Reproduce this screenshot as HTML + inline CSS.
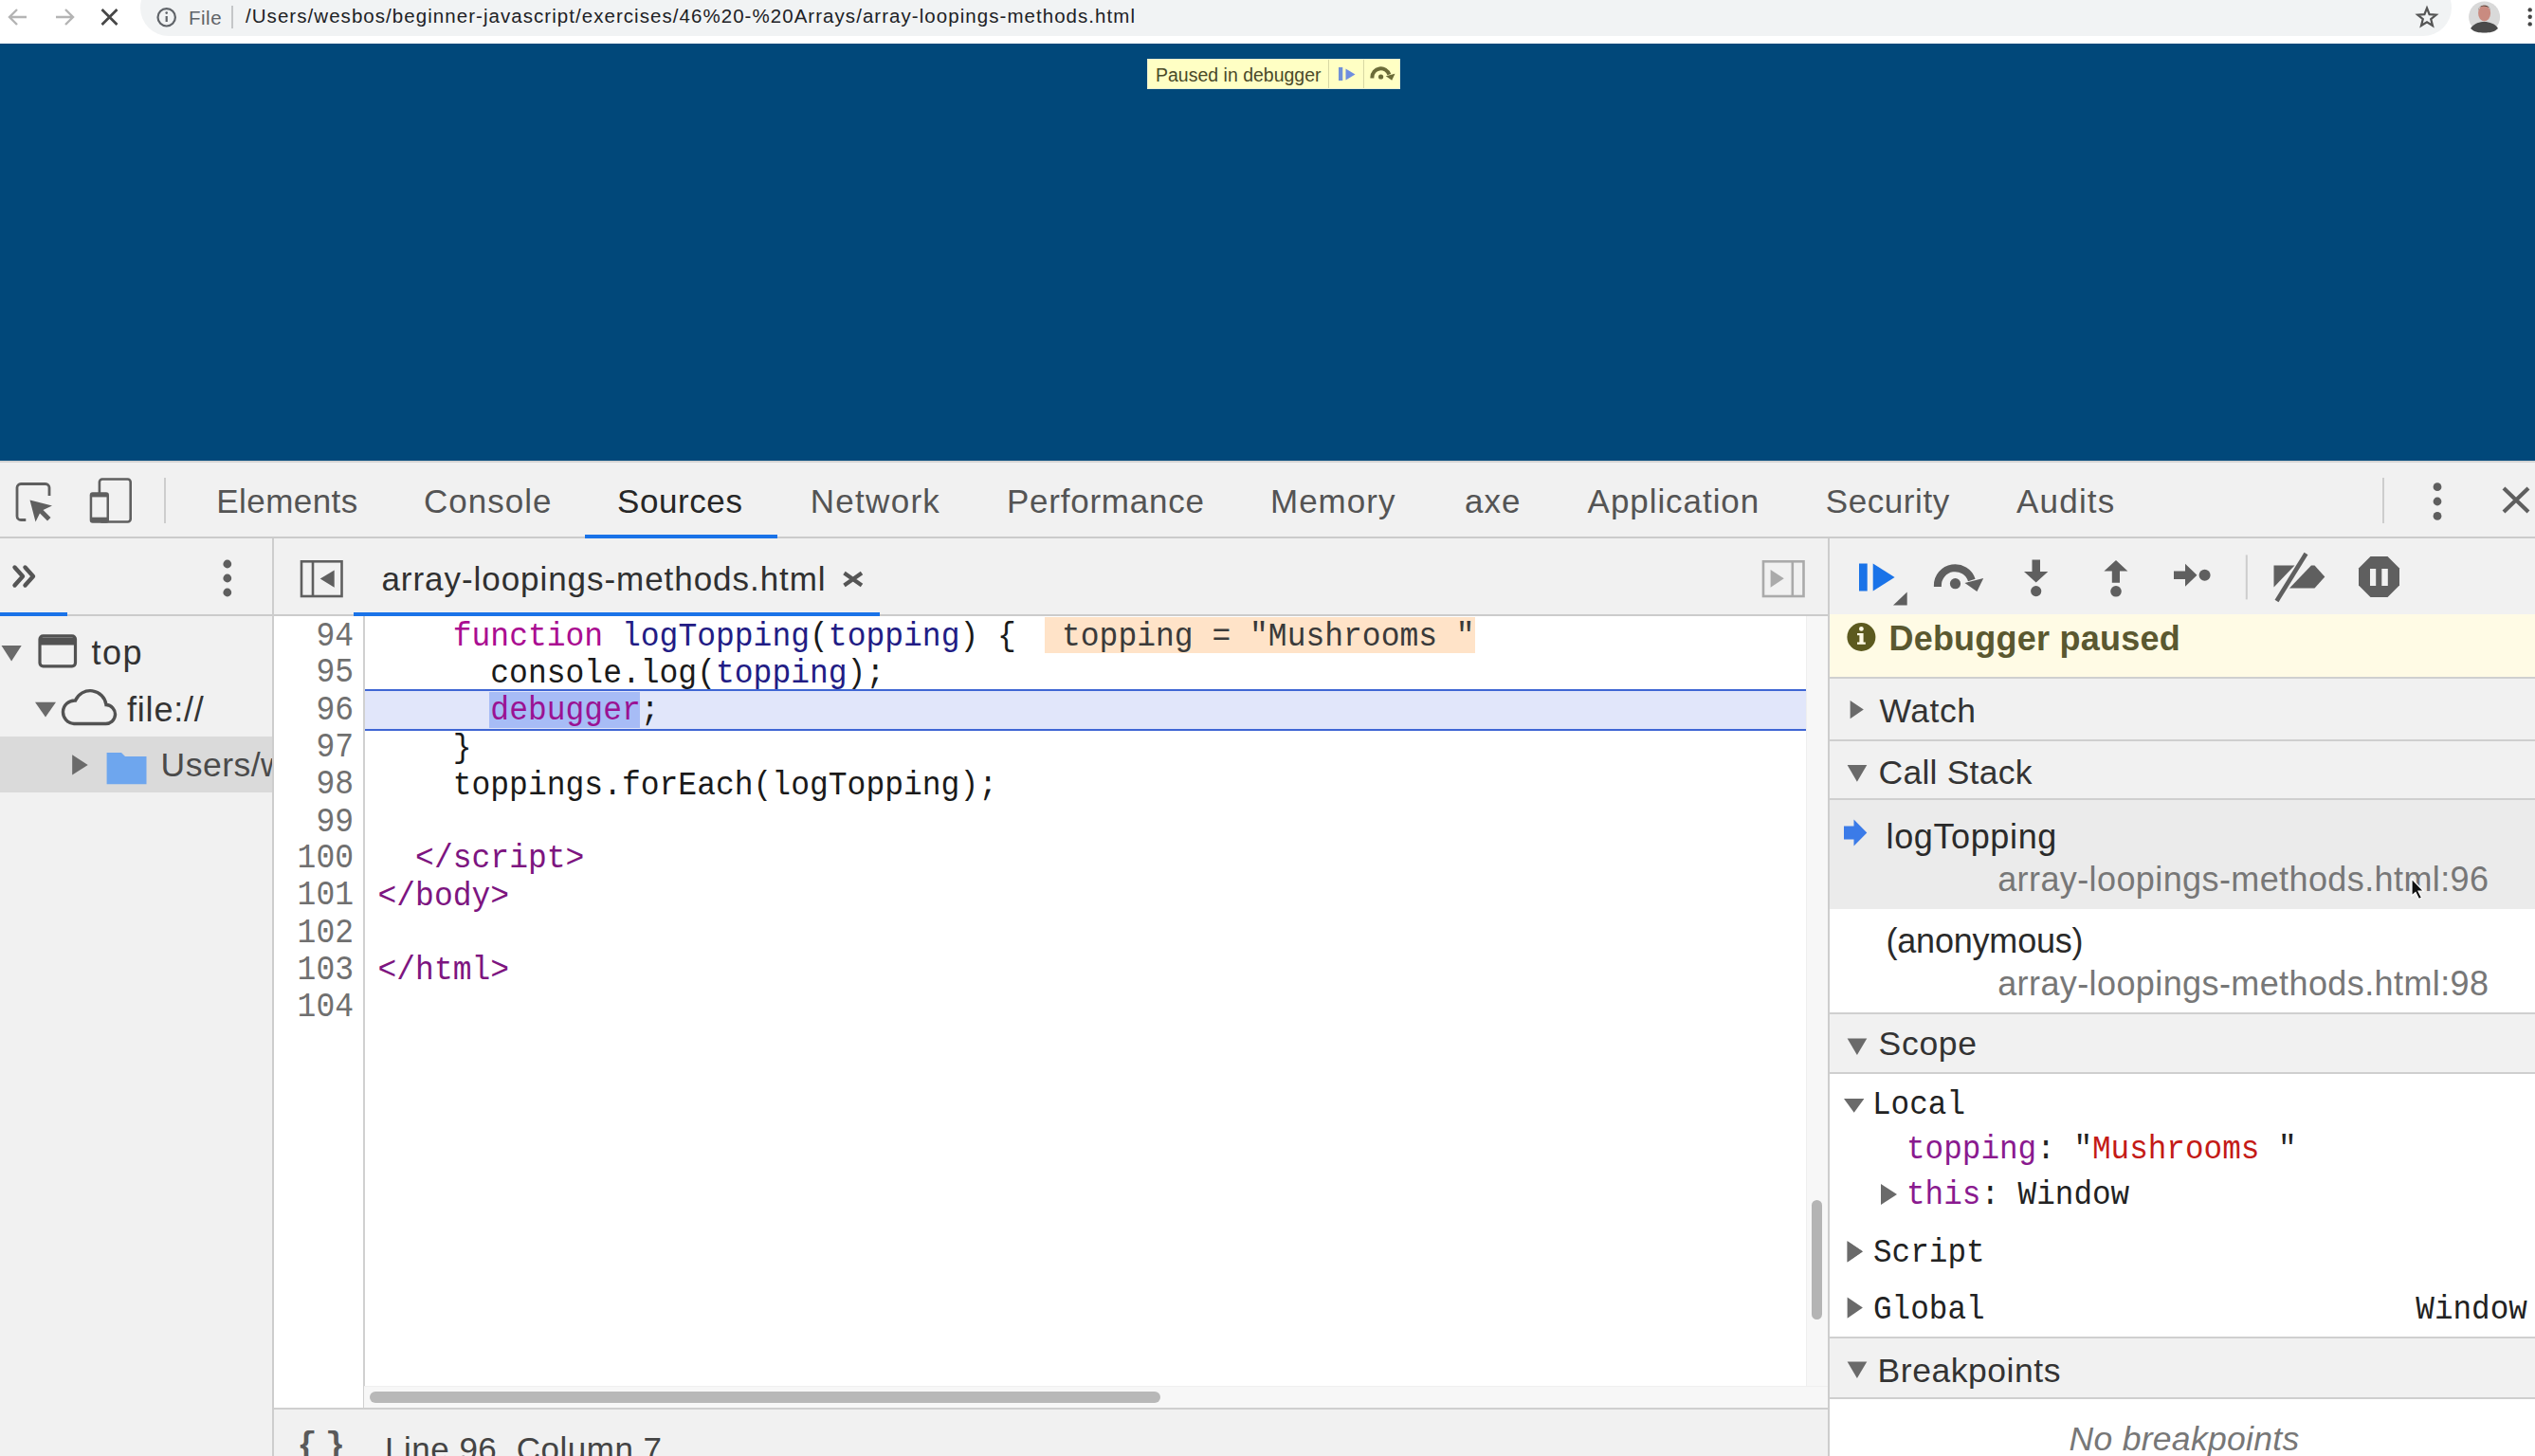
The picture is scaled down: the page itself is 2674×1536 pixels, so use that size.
<!DOCTYPE html>
<html><head><meta charset="utf-8">
<style>
*{box-sizing:border-box;margin:0;padding:0}
html,body{width:2674px;height:1536px;overflow:hidden;background:#fff}
body{position:relative;font-family:"Liberation Sans",sans-serif;color:#333}
.a{position:absolute}
.t{position:absolute;white-space:pre;line-height:1}
.mono{font-family:"Liberation Mono",monospace}
svg{position:absolute;overflow:visible}
</style></head><body>

<!-- Chrome toolbar -->
<div class="a" style="left:0;top:0;width:2674px;height:46px;background:#fff"></div>
<div class="a" style="left:148px;top:-22px;width:2438px;height:60px;border-radius:30px;background:#f1f3f4"></div>
<svg style="left:0;top:0" width="200" height="46">
  <path d="M28 18H11M18 10L10 18L18 26" stroke="#b4b4b4" stroke-width="2.4" fill="none"/>
  <path d="M59 18H76M69 10L77 18L69 26" stroke="#b4b4b4" stroke-width="2.4" fill="none"/>
  <path d="M107.5 10L123.5 26M123.5 10L107.5 26" stroke="#474747" stroke-width="2.8" fill="none"/>
  <circle cx="175.7" cy="18.3" r="9.2" stroke="#5f6368" stroke-width="2.2" fill="none"/>
  <path d="M175.7 17v6" stroke="#5f6368" stroke-width="2.2"/>
  <circle cx="175.7" cy="13.6" r="1.3" fill="#5f6368"/>
</svg>
<div class="t" style="left:199px;top:8.8px;font-size:20.5px;color:#5f6368;letter-spacing:0.5px">File</div>
<div class="a" style="left:244px;top:6px;width:2px;height:24px;background:#c4c6c8"></div>
<div class="t" id="url" style="left:259px;top:7px;font-size:20.5px;color:#202124;letter-spacing:1.05px">/Users/wesbos/beginner-javascript/exercises/46%20-%20Arrays/array-loopings-methods.html</div>
<svg style="left:2540px;top:0" width="134" height="46">
  <path d="M20 8.5L22.6 15.2L29.7 15.6L24.2 20.1L26 27L20 23.2L14 27L15.8 20.1L10.3 15.6L17.4 15.2Z" stroke="#555" stroke-width="2.2" fill="none" stroke-linejoin="miter"/>
  <circle cx="80.6" cy="18" r="16.5" fill="#d9d9d9"/>
  <path d="M66 30C70 24 76 23 80.6 23C86 23 92 25 95 30C91 34 86 34.5 80.6 34.5C75 34.5 70 34 66 30Z" fill="#4a4a4a"/>
  <ellipse cx="80.6" cy="14" rx="6.5" ry="8.5" fill="#c98b80"/>
  <path d="M74 11C74 4 87 4 87 11L86 8C82 6 78 6 75 8Z" fill="#4b3f35"/>
  <circle cx="128.7" cy="10.4" r="2.2" fill="#444"/>
  <circle cx="128.7" cy="17.8" r="2.2" fill="#444"/>
  <circle cx="128.7" cy="25.4" r="2.2" fill="#444"/>
</svg>

<!-- Page -->
<div class="a" style="left:0;top:46px;width:2674px;height:440px;background:#01487a"></div>
<div class="a" style="left:1210px;top:62px;width:267px;height:32px;background:#ffffc4;border:1px solid #e9eecf"></div>
<div class="a" style="left:1401px;top:63px;width:1px;height:30px;background:#d8d8a4"></div>
<div class="a" style="left:1438px;top:63px;width:1px;height:30px;background:#d8d8a4"></div>
<div class="t" style="left:1219px;top:70px;font-size:19.5px;color:#4a4a28">Paused in debugger</div>
<svg style="left:1400px;top:60px" width="80" height="36">
  <rect x="12" y="11" width="4.3" height="14" fill="#7090d8"/>
  <path d="M19.5 12.4L29.5 18.5L19.5 24.5Z" fill="#6f8ee0"/>
  <path d="M47.4 22.5V21.5A9.2 9.2 0 0 1 65.35 18.65" stroke="#6b6b38" stroke-width="4" fill="none"/>
  <path d="M61.8 20.2L71.5 17.8L68.2 24.8Z" fill="#6b6b38"/>
  <circle cx="56.6" cy="21" r="2.6" fill="#6b6b38"/>
</svg>

<!-- DevTools main toolbar -->
<div class="a" style="left:0;top:486px;width:2674px;height:82px;background:#f1f1f1;border-top:2px solid #d3d3d3;border-bottom:2px solid #cbcbcb"></div>
<svg style="left:0;top:486px" width="200" height="82">
  <path d="M27.3 62.5H22A4 4 0 0 1 18 58.5V28.5A4 4 0 0 1 22 24.5H48A4 4 0 0 1 52 28.5V37" stroke="#5f5f5f" stroke-width="2.8" fill="none"/>
  <path d="M31.5 41.5L55 47.5L45.5 52L53.5 60L50 63.5L42 55.5L37.5 64.5Z" fill="#5f5f5f"/>
  <rect x="104.9" y="19.5" width="32.8" height="45" rx="3" stroke="#5f5f5f" stroke-width="2.6" fill="#f1f1f1"/>
  <rect x="94.7" y="33.3" width="20.3" height="32.4" rx="3" fill="#5f5f5f"/>
  <rect x="97.2" y="38.4" width="15.3" height="21.3" fill="#f1f1f1"/>
</svg>
<div class="a" style="left:173px;top:504px;width:2px;height:48px;background:#cdcdcd"></div>
<div class="t" style="left:228.3px;top:511px;font-size:35px;color:#545454;letter-spacing:0.43px">Elements</div>
<div class="t" style="left:447.0px;top:511px;font-size:35px;color:#545454;letter-spacing:1.0px">Console</div>
<div class="t" style="left:651.0px;top:511px;font-size:35px;color:#262626;letter-spacing:0.58px">Sources</div>
<div class="a" style="left:617px;top:564px;width:203px;height:4px;background:#1a73e8"></div>
<div class="t" style="left:854.8px;top:511px;font-size:35px;color:#545454;letter-spacing:1.28px">Network</div>
<div class="t" style="left:1061.9px;top:511px;font-size:35px;color:#545454;letter-spacing:0.77px">Performance</div>
<div class="t" style="left:1340.0px;top:511px;font-size:35px;color:#545454;letter-spacing:1.0px">Memory</div>
<div class="t" style="left:1545.0px;top:511px;font-size:35px;color:#545454;letter-spacing:1.0px">axe</div>
<div class="t" style="left:1674.6px;top:511px;font-size:35px;color:#545454;letter-spacing:0.94px">Application</div>
<div class="t" style="left:1925.7px;top:511px;font-size:35px;color:#545454;letter-spacing:0.6px">Security</div>
<div class="t" style="left:2127.0px;top:511px;font-size:35px;color:#545454;letter-spacing:1.2px">Audits</div>
<div class="a" style="left:2513px;top:504px;width:2px;height:48px;background:#cdcdcd"></div>
<svg style="left:2540px;top:486px" width="134" height="82">
  <circle cx="31" cy="27.7" r="4.4" fill="#5f5f5f"/>
  <circle cx="31" cy="43" r="4.4" fill="#5f5f5f"/>
  <circle cx="31" cy="58.4" r="4.4" fill="#5f5f5f"/>
  <path d="M101 29L127 54M127 29L101 54" stroke="#5f5f5f" stroke-width="4.2"/>
</svg>


<!-- Second row -->
<div class="a" style="left:0;top:568px;width:1930px;height:82px;background:#f1f1f1;border-bottom:2px solid #cbcbcb"></div>
<div class="a" style="left:0;top:646px;width:71px;height:4px;background:#1a73e8"></div>
<svg style="left:0;top:568px" width="300" height="82">
  <path d="M15.5 30.5L24 40L15.5 49.5M26.5 30.5L35 40L26.5 49.5" stroke="#555" stroke-width="4.4" fill="none" stroke-linecap="round" stroke-linejoin="round"/>
  <circle cx="239.8" cy="27" r="4.4" fill="#5f5f5f"/>
  <circle cx="239.8" cy="42" r="4.4" fill="#5f5f5f"/>
  <circle cx="239.8" cy="57" r="4.4" fill="#5f5f5f"/>
</svg>
<div class="a" style="left:287px;top:568px;width:2px;height:968px;background:#cdcdcd"></div>
<svg style="left:289px;top:568px" width="100" height="82">
  <rect x="29" y="24.3" width="42.5" height="36.7" stroke="#5f5f5f" stroke-width="2.6" fill="none"/>
  <path d="M41 24.3V61" stroke="#5f5f5f" stroke-width="2.6"/>
  <path d="M63.7 33.5V51.7L48.7 42.6Z" fill="#5f5f5f"/>
</svg>
<div class="t" id="ftab" style="left:402.4px;top:592.5px;font-size:35px;color:#303030;letter-spacing:0.95px">array-loopings-methods.html</div>
<svg style="left:880px;top:590px" width="40" height="40">
  <path d="M10.5 14.5L29 27.5M29 14.5L10.5 27.5" stroke="#555" stroke-width="4.2"/>
</svg>
<div class="a" style="left:373px;top:646px;width:555px;height:4px;background:#1a73e8"></div>
<svg style="left:1850px;top:568px" width="80" height="82">
  <rect x="10" y="24.3" width="42.5" height="36.7" stroke="#aaa" stroke-width="2.6" fill="none"/>
  <path d="M40.8 24.3V61" stroke="#aaa" stroke-width="2.6"/>
  <path d="M17.6 33V51.7L31.8 42.3Z" fill="#aaa"/>
</svg>

<!-- Navigator -->
<div class="a" style="left:0;top:650px;width:287px;height:886px;background:#f1f1f1"></div>
<div class="a" style="left:0;top:777px;width:287px;height:59px;background:#dadada"></div>
<svg style="left:0;top:650px" width="287" height="200">
  <path d="M1.5 31H22.7L12.1 47.4Z" fill="#6a6a6a"/>
  <rect x="42" y="20.8" width="37.5" height="32" rx="3.5" stroke="#525252" stroke-width="3.2" fill="none"/>
  <path d="M42 26.5H79.5" stroke="#525252" stroke-width="8"/>
  <path d="M37 90.7H59L48 106.5Z" fill="#6a6a6a"/>
  <path d="M78 113.5H111A10 10 0 0 0 112 93.5A17 17 0 0 0 79.5 89A12.2 12.2 0 0 0 78 113.5Z" stroke="#525252" stroke-width="3.4" fill="none"/>
  <path d="M76.2 146.3L92.7 156.9L76.2 167.6Z" fill="#6a6a6a"/>
  <path d="M112.6 144H128L132 148H154.5V177.2H112.6Z" fill="#6ea6ee"/>
</svg>
<div class="t" style="left:96.5px;top:671px;font-size:36px;color:#333;letter-spacing:1.5px">top</div>
<div class="t" style="left:134px;top:730.8px;font-size:36px;color:#333;letter-spacing:0.8px">file://</div>
<div class="a" style="left:0;top:786px;width:287px;height:50px;overflow:hidden"><div class="t" style="left:169.5px;top:4px;font-size:35.5px;color:#4a4a4a;letter-spacing:0.5px">Users/wesbos/beginner-javascript</div></div>

<!-- Editor -->
<div class="a" style="left:289px;top:650px;width:1639px;height:836px;background:#fff"></div>
<div class="a" style="left:382.5px;top:650px;width:2px;height:836px;background:#d0d0d0"></div>
<div class="a" style="left:1905px;top:650px;width:23px;height:813px;background:#f7f7f7;border-left:1px solid #efefef"></div>
<div class="a" style="left:1911px;top:1266px;width:11px;height:126px;border-radius:6px;background:#b4b4b4"></div>
<div class="a" style="left:384px;top:1462px;width:1544px;height:24px;background:#f7f7f7;border-top:1px solid #efefef"></div>
<div class="a" style="left:390px;top:1468px;width:834px;height:12px;border-radius:6px;background:#b8b8b8"></div>
<div class="a" style="left:289px;top:1485px;width:1639px;height:2px;background:#cfcfcf"></div>
<div class="a" style="left:289px;top:1487px;width:1639px;height:49px;background:#f1f1f1"></div>
<div class="t mono" style="left:313.5px;top:1509px;font-size:35px;color:#5a5a5a;font-weight:bold;letter-spacing:-6.2px">{ }</div>
<div class="t" style="left:406px;top:1510.5px;font-size:35px;color:#444;letter-spacing:0.5px">Line 96, Column 7</div>

<!-- Code -->
<div class="a" style="left:1102px;top:651px;width:454px;height:38px;background:#ffe3c8"></div>
<div class="a" style="left:384.5px;top:727px;width:1520.5px;height:44px;background:#e1e6fa;border-top:2.5px solid #3f66d4;border-bottom:2.5px solid #3f66d4"></div>
<div class="a" style="left:516px;top:730px;width:159px;height:38px;background:#a7bcf6"></div>
<div class="a mono" id="gut" style="left:289px;top:651.7px;width:84px;font-size:33px;line-height:34.325px;transform:scaleY(1.14);transform-origin:0 0;color:#707070;text-align:right;white-space:pre">94
95
96
97
98
99
100
101
102
103
104</div>
<div class="a mono" id="code" style="left:398.5px;top:653px;font-size:33px;line-height:36.231px;transform:scaleY(1.08);transform-origin:0 0;color:#1a1a1a;white-space:pre">    <span style="color:#aa0d91">function</span> <span style="color:#221c85">logTopping</span>(<span style="color:#221c85">topping</span>) {
      console.log(<span style="color:#221c85">topping</span>);
      <span style="color:#9a1293">debugger</span>;
    }
    toppings.forEach(logTopping);

  <span style="color:#7d1580">&lt;/script&gt;</span>
<span style="color:#7d1580">&lt;/body&gt;</span>

<span style="color:#7d1580">&lt;/html&gt;</span>
</div>
<div class="t mono" style="left:1120px;top:653px;font-size:33px;line-height:36.231px;transform:scaleY(1.08);transform-origin:0 0;color:#3a3a3a">topping = "Mushrooms "</div>

<!-- Sidebar -->
<div class="a" style="left:1928px;top:568px;width:2px;height:968px;background:#cdcdcd"></div>
<div class="a" style="left:1930px;top:568px;width:744px;height:80px;background:#f1f1f1"></div>


<svg style="left:1930px;top:568px" width="744" height="82">
  <rect x="31" y="26.5" width="8.7" height="29" fill="#1a73e8"/>
  <path d="M45.7 26.5L68.6 41L45.7 55.6Z" fill="#1a73e8"/>
  <path d="M67 70.6L81.7 56.4V70.6Z" fill="#5f5f5f"/>
  <path d="M113.9 51V49.6A18.4 18.4 0 0 1 149.8 43.9" stroke="#5f5f5f" stroke-width="8" fill="none"/>
  <path d="M142.5 47L162.2 42L155.4 56Z" fill="#5f5f5f"/>
  <circle cx="132.5" cy="47.7" r="5.6" fill="#5f5f5f"/>
  <path d="M213.5 22.5H222V35H230.3L217.7 46.5L205 35H213.5Z" fill="#5f5f5f"/>
  <circle cx="217.7" cy="55.6" r="5.6" fill="#5f5f5f"/>
  <path d="M302 23L314.4 34.6H306V46.7H297.8V34.6H289.4Z" fill="#5f5f5f"/>
  <circle cx="302" cy="55.8" r="5.8" fill="#5f5f5f"/>
  <path d="M363 34.5H375V26.8L387.5 38.8L375 50.8V43H363Z" fill="#5f5f5f"/>
  <circle cx="395.6" cy="38.8" r="6" fill="#5f5f5f"/>
  <rect x="438.8" y="17.4" width="2" height="47" fill="#cdcdcd"/>
  <path d="M468.5 28.5H490.5L468.5 51.5Z" fill="#5f5f5f"/>
  <path d="M485 52.5L508 28.5H511.5L522.3 40.5L511.5 52.5Z" fill="#5f5f5f"/>
  <path d="M471.5 66L502.5 16" stroke="#5f5f5f" stroke-width="4.6"/>
  <path d="M468.5 28.5H490.5" stroke="#5f5f5f" stroke-width="0"/>
  <path d="M570.5 19H588.5L601 31.5V49.5L588.5 62H570.5L558 49.5V31.5Z" fill="#5f5f5f"/>
  <rect x="570" y="32" width="6.2" height="18" fill="#f1f1f1"/>
  <rect x="582.3" y="32" width="6.5" height="18" fill="#f1f1f1"/>
</svg>

<!-- Debugger paused -->
<div class="a" style="left:1930px;top:648px;width:744px;height:66px;background:#fffbe5"></div>
<div class="a" style="left:1930px;top:714px;width:744px;height:2px;background:#cfcfcf"></div>
<svg style="left:1930px;top:648px" width="80" height="66">
  <circle cx="33.4" cy="24" r="15" fill="#5c5a1f"/>
  <rect x="31.4" y="20" width="4.2" height="11" fill="#fffbe5"/>
  <rect x="29" y="29.5" width="8.8" height="2.3" fill="#fffbe5"/>
  <rect x="29" y="20" width="4" height="2.2" fill="#fffbe5"/>
  <circle cx="33.4" cy="15.4" r="2.4" fill="#fffbe5"/>
</svg>
<div class="t" style="left:1992.4px;top:656px;font-size:36px;font-weight:bold;color:#5a5830;letter-spacing:0.24px">Debugger paused</div>

<!-- Watch -->
<div class="a" style="left:1930px;top:716px;width:744px;height:65px;background:#f1f1f1"></div>
<div class="a" style="left:1930px;top:780px;width:744px;height:2px;background:#cfcfcf"></div>
<svg style="left:1930px;top:716px" width="60" height="66"><path d="M21.6 23L35.8 32.6L21.6 42.2Z" fill="#6a6a6a"/></svg>
<div class="t" style="left:1982.6px;top:733px;font-size:35.5px;color:#333;letter-spacing:0.5px">Watch</div>

<!-- Call Stack -->
<div class="a" style="left:1930px;top:782px;width:744px;height:61px;background:#f1f1f1"></div>
<div class="a" style="left:1930px;top:842px;width:744px;height:2px;background:#cfcfcf"></div>
<svg style="left:1930px;top:782px" width="60" height="66"><path d="M18.6 25H39.3L28.9 42.7Z" fill="#6a6a6a"/></svg>
<div class="t" style="left:1981.6px;top:798px;font-size:35.5px;color:#333;letter-spacing:0.22px">Call Stack</div>
<div class="a" style="left:1930px;top:844px;width:744px;height:116px;background:#ebebeb"></div>
<div class="a" style="left:1930px;top:959px;width:744px;height:110px;background:#fff"></div>
<svg style="left:1930px;top:844px" width="60" height="60"><path d="M15 27.5H25.5V20.5L39.3 34.5L25.5 48.5V41.5H15Z" fill="#3b7be8"/></svg>
<div class="t" style="left:1989.5px;top:864.5px;font-size:36px;color:#2a2a2a;letter-spacing:0.63px">logTopping</div>
<div class="t" style="left:2107.2px;top:910px;font-size:36px;color:#777;letter-spacing:0.4px">array-loopings-methods.html:96</div>
<div class="t" style="left:1989.5px;top:975.3px;font-size:36px;color:#2a2a2a;letter-spacing:-0.2px">(anonymous)</div>
<div class="t" style="left:2107.2px;top:1020px;font-size:36px;color:#777;letter-spacing:0.4px">array-loopings-methods.html:98</div>
<svg style="left:2542px;top:924.5px" width="30" height="40"><path d="M2 2V20L6 16.5L9.5 23.5L12.5 22L9 15H14.5Z" fill="#111" stroke="#fff" stroke-width="1.2"/></svg>

<!-- Scope -->
<div class="a" style="left:1930px;top:1068px;width:744px;height:2px;background:#cfcfcf"></div>
<div class="a" style="left:1930px;top:1070px;width:744px;height:61px;background:#f1f1f1"></div>
<div class="a" style="left:1930px;top:1131px;width:744px;height:2px;background:#cfcfcf"></div>
<svg style="left:1930px;top:1070px" width="60" height="60"><path d="M18.6 25.5H39.3L28.9 43Z" fill="#6a6a6a"/></svg>
<div class="t" style="left:1981.6px;top:1084px;font-size:35.5px;color:#333;letter-spacing:0.7px">Scope</div>
<div class="a" style="left:1930px;top:1133px;width:744px;height:278px;background:#fff"></div>
<svg style="left:1930px;top:1133px" width="100" height="200">
  <path d="M15 26H36.4L25.7 40.7Z" fill="#6a6a6a"/>
  <path d="M54 116L71 127L54 138Z" fill="#6a6a6a"/>
  <path d="M18.6 176.2L34.9 187.3L18.6 198.4Z" fill="#6a6a6a"/>
</svg>
<div class="t mono" style="left:1975px;top:1149px;font-size:32.67px;line-height:32.67px;transform:scaleY(1.08);transform-origin:0 0;color:#222">Local</div>
<div class="t mono" style="left:2011px;top:1196px;font-size:32.67px;line-height:32.67px;transform:scaleY(1.08);transform-origin:0 0;color:#222"><span style="color:#8a1a8f">topping</span>: "<span style="color:#c41a16">Mushrooms</span> "</div>
<div class="t mono" style="left:2011px;top:1244px;font-size:32.67px;line-height:32.67px;transform:scaleY(1.08);transform-origin:0 0;color:#222"><span style="color:#8a1a8f">this</span>: Window</div>
<div class="t mono" style="left:1976px;top:1305px;font-size:32.67px;line-height:32.67px;transform:scaleY(1.08);transform-origin:0 0;color:#222">Script</div>
<div class="t mono" style="left:1976px;top:1365px;font-size:32.67px;line-height:32.67px;transform:scaleY(1.08);transform-origin:0 0;color:#222">Global</div>
<div class="t mono" style="left:2548.3px;top:1365px;font-size:32.67px;line-height:32.67px;transform:scaleY(1.08);transform-origin:0 0;color:#222">Window</div>
<svg style="left:1930px;top:1290px" width="60" height="120">
  <path d="M18.6 19.2L34.9 30.3L18.6 41.4Z" fill="#6a6a6a"/>
  <path d="M18.6 78.5L34.9 89.6L18.6 100.7Z" fill="#6a6a6a"/>
</svg>

<!-- Breakpoints -->
<div class="a" style="left:1930px;top:1410px;width:744px;height:2px;background:#cfcfcf"></div>
<div class="a" style="left:1930px;top:1412px;width:744px;height:62px;background:#f1f1f1"></div>
<div class="a" style="left:1930px;top:1474px;width:744px;height:2px;background:#cfcfcf"></div>
<svg style="left:1930px;top:1412px" width="60" height="60"><path d="M18.6 24.5H39.3L28.9 42Z" fill="#6a6a6a"/></svg>
<div class="t" style="left:1980.6px;top:1428.8px;font-size:35.5px;color:#333;letter-spacing:0.54px">Breakpoints</div>
<div class="a" style="left:1930px;top:1476px;width:744px;height:60px;background:#fff"></div>
<div class="t" style="left:2182.5px;top:1501.2px;font-size:35.5px;font-style:italic;color:#777;letter-spacing:0.3px">No breakpoints</div>

</body></html>
